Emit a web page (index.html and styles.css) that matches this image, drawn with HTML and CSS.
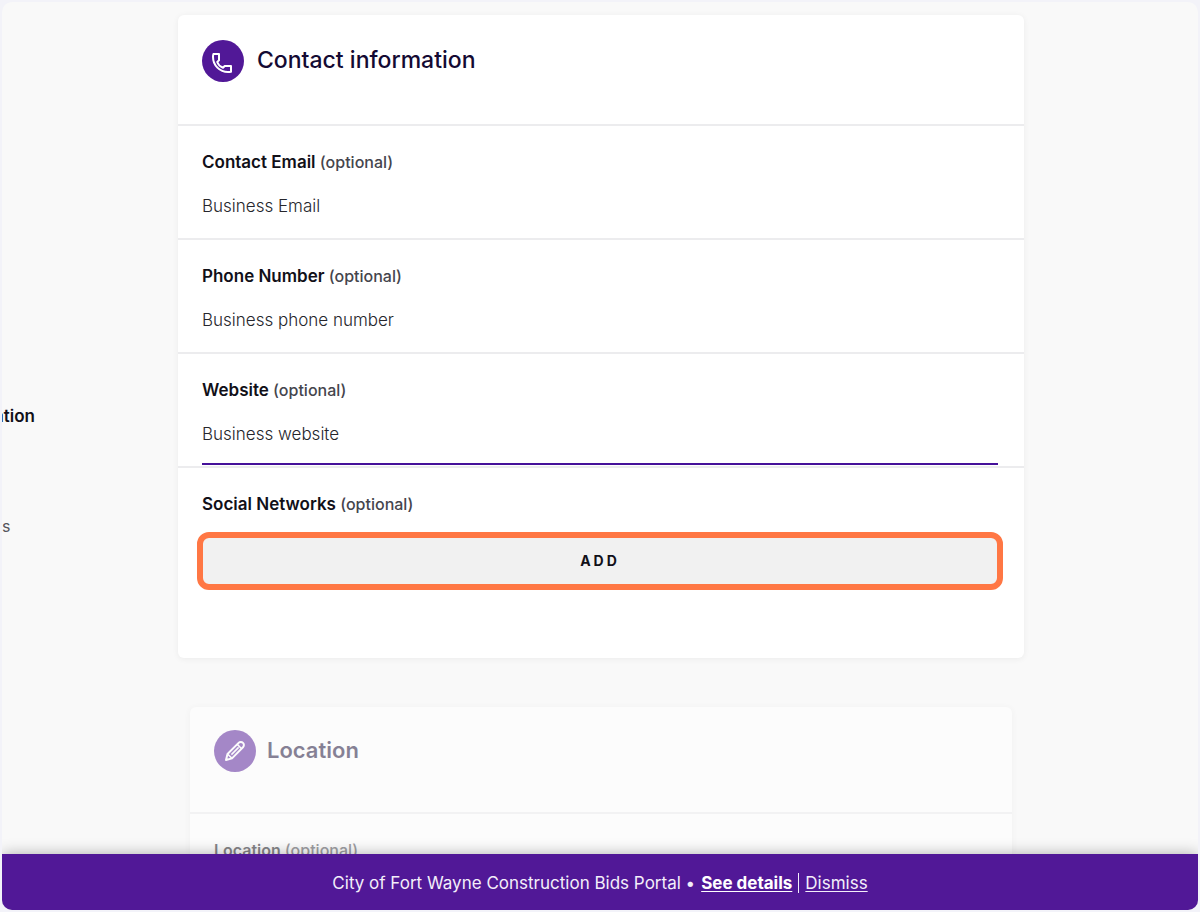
FILE: index.html
```
<!DOCTYPE html>
<html lang="en">
<head>
  <meta charset="UTF-8">
  <meta name="viewport" content="width=device-width, initial-scale=1.0">
  <title>Contact information</title>
  <link rel="stylesheet" href="styles.css">
</head>

<body>
  <div class="window">
    <div class="content">
      <nav class="sidebar">
        <a class="step step-current" href="#contact">ation</a>
        <a class="step" href="#location">s</a>
      </nav>

      <main class="cards">
        <form class="card" id="contact">
          <header class="card-header">
            <span class="card-icon phone">
              <svg viewBox="0 0 24 24" width="24" height="24" fill="none" stroke="currentColor" stroke-width="2" stroke-linejoin="round">
                <path d="M3.4 3H9V9.3L7.2 11C8.2 13.6 10.4 15.8 13 16.8L14.7 15H21V20.7C20.2 20.9 19.2 21 18 21C9.7 21 3 14.3 3 6C3 4.8 3.1 3.8 3.4 3Z"/>
              </svg>
            </span>
            <h2>Contact information</h2>
          </header>
          <div class="field">
            <label for="email">Contact Email <span class="optional">(optional)</span></label>
            <input type="email" id="email" placeholder="Business Email">
          </div>
          <div class="field">
            <label for="phone">Phone Number <span class="optional">(optional)</span></label>
            <input type="tel" id="phone" placeholder="Business phone number">
          </div>
          <div class="field">
            <label for="website">Website <span class="optional">(optional)</span></label>
            <input class="active" type="url" id="website" placeholder="Business website">
          </div>
          <div class="field field-last">
            <label for="add-network">Social Networks <span class="optional">(optional)</span></label>
            <button type="button" class="add-button" id="add-network">ADD</button>
          </div>
        </form>

        <form class="card card-next" id="location">
          <header class="card-header">
            <span class="card-icon">
              <svg viewBox="0 0 24 24" width="24" height="24" fill="none" stroke="currentColor" stroke-width="2" stroke-linejoin="round">
                <path d="M3 21L4.5 15L15.6 3.9C16.8 2.7 18.8 2.7 20 3.9C21.2 5.1 21.2 7.1 20 8.3L9 19.4Z"/>
                <path d="M4.5 15L9 19.4M14.3 5.4L18.6 9.7M8.4 15.6L15.6 8.4" stroke-width="1.5"/>
              </svg>
            </span>
            <h2>Location</h2>
          </header>
          <div class="field">
            <label for="address">Location <span class="optional">(optional)</span></label>
            <input type="text" id="address">
          </div>
        </form>
      </main>
    </div>

    <footer class="banner">
      <span>City of Fort Wayne Construction Bids Portal •</span>
      <a class="details" href="#details">See details</a>
      <span class="divider"></span>
      <a href="#dismiss">Dismiss</a>
    </footer>
  </div>
</body>
</html>
```
FILE: styles.css
```
* {
  box-sizing: border-box;
}
body {
  margin: 0;
  padding: 2px;
  height: 100vh;
  background-color: #f3f3f9;
  color: #111018;
  font-family: Inter, "Liberation Sans", sans-serif;
  font-size: 17px;
}
.window {
  display: flex;
  flex-direction: column;
  height: 100%;
  border-radius: 10px;
  overflow: hidden;
  background-color: #f9f9f9;
}
.content {
  flex: 1;
  min-height: 0;
  display: grid;
  grid-template-columns: 1fr minmax(0, 846px) 1fr;
  padding-left: 2px;
  overflow: hidden;
}

/* step list on the left */
.sidebar {
  display: flex;
  flex-direction: column;
  align-items: flex-start;
  gap: 86px;
  padding-top: 402px;
  margin-left: -10px;
}
.step {
  color: #55555c;
  font-size: 16px;
  line-height: 24px;
  text-decoration: none;
  padding-left: 8px;
}
.step-current {
  color: #111018;
  font-size: 17px;
  font-weight: 600;
  padding-left: 0;
}

/* cards */
.card {
  margin-top: 13px;
  background-color: #fff;
  border-radius: 6px;
  box-shadow: 0 1px 6px rgba(0, 0, 0, 0.06);
}
.card-header {
  display: flex;
  align-items: flex-start;
  gap: 13px;
  height: 111px;
  padding: 25px 24px 0;
  border-bottom: 2px solid #ececee;
}
.card-icon {
  display: flex;
  align-items: center;
  justify-content: center;
  width: 42px;
  height: 42px;
  border-radius: 50%;
  background-color: #511897;
  color: #fff;
}
.card-icon.phone {
  padding: 3px 2px 0 0;
}
h2 {
  margin: 0;
  color: #140a33;
  font-size: 23px;
  font-weight: 500;
  line-height: 41px;
}
.field {
  display: flex;
  flex-direction: column;
  padding: 24px 26px 1px 24px;
  border-bottom: 2px solid #ececee;
}
.field label {
  font-weight: 600;
  line-height: 24px;
}
.field .optional {
  color: #45454d;
  font-size: 16px;
  font-weight: 500;
}
.field input {
  height: 49px;
  margin-top: 14px;
  padding: 0 0 11px;
  border: none;
  border-bottom: 2px solid transparent;
  outline: none;
  background: none;
  font: inherit;
}
.field input::placeholder {
  color: #26262c;
  font-weight: 300;
  opacity: 1;
}
.field input.active {
  border-color: #45119a;
}
.field-last {
  padding-bottom: 68px;
  border-bottom: none;
}
.add-button {
  height: 58px;
  margin: 16px -5px 0;
  padding: 0 0 2px;
  border: 6px solid #ff7744;
  border-radius: 12px;
  background-color: #f1f1f1;
  color: #111018;
  font-family: inherit;
  font-size: 14px;
  font-weight: 700;
  letter-spacing: 3px;
  cursor: pointer;
}
.card-next {
  margin: 49px 12px 0;
  opacity: 0.5;
}
.card-next .card-header {
  height: 107px;
  gap: 11px;
  padding-top: 23px;
}
.card-next h2 {
  font-size: 22px;
  font-weight: 600;
}
.card-next label {
  font-size: 16px;
}

/* notice at the bottom */
.banner {
  position: relative;
  display: flex;
  align-items: center;
  justify-content: center;
  flex: none;
  gap: 6px;
  height: 56px;
  padding-top: 2px;
  background-color: #511897;
  color: #f3eefa;
  box-shadow: 0 0 14px rgba(0, 0, 0, 0.3);
}
.banner a {
  color: inherit;
  text-underline-offset: 2px;
}
.banner .details {
  color: #fff;
  font-weight: 700;
}
.divider {
  width: 1px;
  height: 20px;
  background-color: #f3eefa;
}
```
